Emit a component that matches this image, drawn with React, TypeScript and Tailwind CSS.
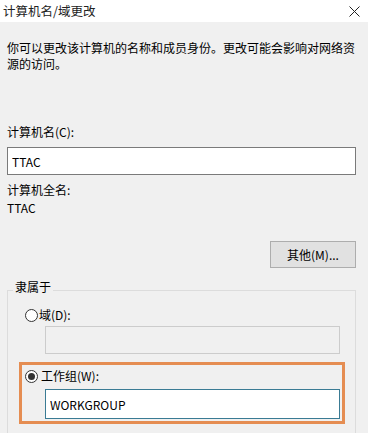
import { useState } from "react";

function Radio({ checked }: { checked?: boolean }) {
  return (
    <span className="grid size-[13px] place-items-center rounded-full border border-[#333] bg-white">
      {checked && <span className="size-[7px] rounded-full bg-[#333]" />}
    </span>
  );
}

export default function App() {
  const [name, setName] = useState("TTAC");
  const [group, setGroup] = useState("WORKGROUP");

  return (
    <div className="h-[433px] w-[368px] overflow-hidden bg-[#f0f0f0] text-[12px] leading-[16px] text-black font-['Noto_Sans_CJK_SC','Noto_Sans',sans-serif]">
      {/* Title bar */}
      <div className="flex h-[22px] items-center justify-between bg-white pl-[3px] pr-[8px]">
        <span className="text-[12.5px] text-[#222]">计算机名/域更改</span>
        <svg width="11" height="11" viewBox="0 0 11 11" className="text-[#222]">
          <path d="M0.5 0.5 L10.5 10.5 M10.5 0.5 L0.5 10.5" stroke="currentColor" strokeWidth="1" />
        </svg>
      </div>

      <div className="pl-[7px] pr-[12px]">
        <p className="mt-[18px] w-[354px]">
          你可以更改该计算机的名称和成员身份。更改可能会影响对网络资源的访问。
        </p>

        <div className="mt-[52px]">计算机名(C):</div>
        <input
          value={name}
          onChange={(e) => setName(e.target.value)}
          className="mt-[7px] h-[28px] w-full border border-[#7a7a7a] bg-white px-[4px] text-[12px] outline-none"
        />

        <div className="mt-[7px]">计算机全名:</div>
        <div className="mt-[2px]">TTAC</div>

        <div className="mt-[25px] flex justify-end">
          <button className="h-[27px] w-[86px] border border-[#adadad] bg-[#e1e1e1] text-[12px]">
            其他(M)...
          </button>
        </div>

        {/* Group box */}
        <div className="mt-[22px] h-[160px] border border-[#dcdcdc]">
          <div className="-mt-[12px] ml-[5px] w-fit bg-[#f0f0f0] px-[2px]">隶属于</div>

          <div className="mt-[12px] flex items-center gap-[1px] pl-[17px]">
            <Radio />
            <span>域(D):</span>
          </div>
          <div className="ml-[37px] mt-[3px] h-[28px] w-[295px] border border-[#cccccc] bg-[#f0f0f0]" />

          <div className="ml-[11px] mt-[8px] w-[326px] border-[3px] border-[#e58d52] pb-[2px] pl-[3px] pt-[3px]">
            <div className="flex items-center gap-[3px]">
              <Radio checked />
              <span>工作组(W):</span>
            </div>
            <input
              value={group}
              onChange={(e) => setGroup(e.target.value)}
              className="ml-[20px] mt-[5px] h-[30px] w-[295px] border border-[#3a7b94] bg-white px-[4px] text-[12px] outline-none"
            />
          </div>
        </div>
      </div>
    </div>
  );
}
